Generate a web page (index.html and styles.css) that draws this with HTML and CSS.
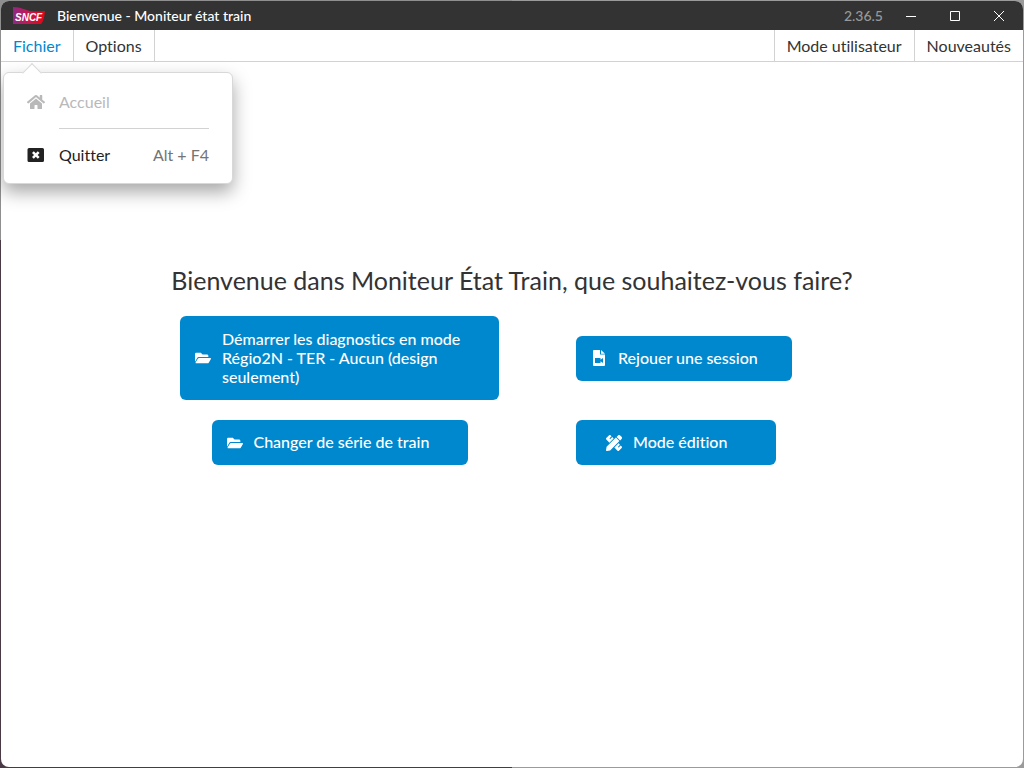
FILE: index.html
```html
<!DOCTYPE html>
<html lang="fr">
<head>
<meta charset="utf-8">
<title>Bienvenue - Moniteur état train</title>
<link rel="stylesheet" href="styles.css">
</head>
<body>
<svg class="defs" aria-hidden="true">
  <symbol id="folder" viewBox="0 0 576 512"><path d="M572.694 292.093L500.27 416.248A63.997 63.997 0 0 1 444.989 448H45.025c-18.523 0-30.064-20.093-20.731-36.093l72.424-124.155A64 64 0 0 1 152 256h399.964c18.523 0 30.064 20.093 20.73 36.093zM152 224h328v-48c0-26.51-21.49-48-48-48H272l-64-64H48C21.490 64 0 85.490 0 112v278.046l69.077-118.418C86.214 242.250 117.989 224 152 224z"/></symbol>
</svg>
<div class="window">
  <header class="titlebar">
    <svg class="logo" viewBox="0 0 32 17" role="img" aria-label="SNCF">
      <defs><linearGradient id="brand"><stop offset="0" stop-color="#8c2a86"/><stop offset=".45" stop-color="#c41854"/><stop offset="1" stop-color="#e3060f"/></linearGradient></defs>
      <path fill="url(#brand)" d="M0 0 C8 0 12 3 17 4 C22 5 27 4 32 4 Q31 14 28 17 L0 17Z"/>
      <text class="logo-text" x="2" y="14">SNCF</text>
    </svg>
    <span class="title">Bienvenue - Moniteur état train</span>
    <span class="version">2.36.5</span>
    <button class="control" aria-label="Réduire"><svg viewBox="0 0 12 12"><path d="M1 6.500h10"/></svg></button>
    <button class="control" aria-label="Agrandir"><svg viewBox="0 0 12 12"><path d="M1.500 1.500h9v9h-9z"/></svg></button>
    <button class="control" aria-label="Fermer"><svg viewBox="0 0 12 12"><path d="M1 1l10 10M11 1L1 11"/></svg></button>
  </header>
  <nav class="menubar">
    <div class="menu">
      <button class="menu-item active">Fichier</button>
      <div class="dropdown">
        <button class="entry" disabled>
          <svg class="entry-icon" viewBox="0 0 576 512"><path d="M280.370 148.260L96 300.110V464a16 16 0 0 0 16 16l112.060-.290a16 16 0 0 0 15.920-16V368a16 16 0 0 1 16-16h64a16 16 0 0 1 16 16v95.640a16 16 0 0 0 16 16.050L464 480a16 16 0 0 0 16-16V300L295.670 148.260a12.190 12.190 0 0 0-15.300 0zM571.600 251.470L488 182.560V44.050a12 12 0 0 0-12-12h-56a12 12 0 0 0-12 12v72.610L318.470 43a48 48 0 0 0-61 0L4.340 251.470a12 12 0 0 0-1.600 16.900l25.500 31A12 12 0 0 0 45.150 301l235.220-193.740a12.190 12.190 0 0 1 15.300 0L530.900 301a12 12 0 0 0 16.900-1.600l25.500-31a12 12 0 0 0-1.700-16.930z"/></svg>
          <span>Accueil</span>
        </button>
        <hr class="separator">
        <button class="entry">
          <svg class="entry-icon" viewBox="0 0 18 16"><path fill-rule="evenodd" d="M2 1h13.500a1.500 1.500 0 0 1 1.500 1.500v11a1.500 1.500 0 0 1-1.500 1.500h-13.500a1.500 1.500 0 0 1-1.500-1.500v-11a1.500 1.500 0 0 1 1.500-1.500zM5 6l2 2-2 2 1.800 1.800 2-2 2 2L12.600 10l-2-2 2-2-1.800-1.800-2 2-2-2z"/></svg>
          <span>Quitter</span>
          <kbd class="shortcut">Alt + F4</kbd>
        </button>
      </div>
    </div>
    <button class="menu-item">Options</button>
    <button class="menu-item push">Mode utilisateur</button>
    <button class="menu-item">Nouveautés</button>
  </nav>
  <main class="content">
    <h1 class="heading">Bienvenue dans Moniteur État Train, que souhaitez-vous faire?</h1>
    <div class="actions">
      <button class="action diagnostics"><svg><use href="#folder"/></svg><span>Démarrer les diagnostics en mode Régio2N - TER - Aucun (design seulement)</span></button>
      <button class="action left replay"><svg viewBox="0 0 16 16"><path fill-rule="evenodd" d="M3 0h6v4.500h5V15a1 1 0 0 1-1 1H3a1 1 0 0 1-1-1V1a1 1 0 0 1 1-1zM4 8v5h5.500v-1.800l2.500 1.800V8l-2.500 1.800V8zM10 0l4 3.700h-4z"/></svg><span>Rejouer une session</span></button>
      <button class="action series"><svg><use href="#folder"/></svg><span>Changer de série de train</span></button>
      <button class="action left edition"><svg viewBox="0 0 512 512"><path d="M109.460 244.040l134.580-134.560-44.120-44.120-61.680 61.680a7.919 7.919 0 0 1-11.210 0l-11.210-11.210c-3.100-3.100-3.100-8.120 0-11.210l61.680-61.680-33.640-33.650C131.470-3.100 111.390-3.100 99 9.290L9.290 99c-12.380 12.390-12.390 32.470 0 44.860l100.170 100.180zm388.470-116.800c18.760-18.760 18.750-49.170 0-67.930l-45.250-45.250c-18.760-18.760-49.180-18.760-67.950 0l-46.020 46.010 113.200 113.200 46.020-46.030zM316.080 82.710l-297 296.960L.32 487.110c-2.530 14.490 10.090 27.110 24.590 24.560l107.450-18.840L429.280 195.900 316.080 82.710zm186.630 285.430l-33.640-33.640-61.680 61.680c-3.100 3.100-8.120 3.100-11.210 0l-11.210-11.210c-3.090-3.100-3.090-8.120 0-11.210l61.680-61.680-44.140-44.140L267.930 402.500l100.210 100.200c12.390 12.390 32.470 12.390 44.860 0l89.710-89.700c12.390-12.390 12.390-32.470 0-44.860z"/></svg><span>Mode édition</span></button>
    </div>
  </main>
</div>
</body>
</html>
```
FILE: styles.css
```css
* { box-sizing: border-box; }

body {
  margin: 0;
  padding: 1px;
  min-height: 100vh;
  display: flex;
  background:
    linear-gradient(#8f8f8f 240px, #4a3a46 240px) left / 50% 100% no-repeat,
    #9b9b9b;
  color: #333;
  font: 16px/20px Lato, "Liberation Sans", sans-serif;
  font-variant-ligatures: none;
}

button {
  border: 0;
  background: none;
  color: inherit;
  font: inherit;
  font-variant-ligatures: none;
  padding: 0;
}

.defs { position: absolute; width: 0; height: 0; }

.window {
  flex: 1;
  display: flex;
  flex-direction: column;
  background: #fff;
  border-radius: 8px;
}

.titlebar {
  display: flex;
  align-items: center;
  height: 29px;
  padding: 0 2px 0 12px;
  background: #333;
  border-radius: 8px 8px 0 0;
  color: #fff;
  font-size: 14px;
  font-weight: 500;
}

.logo { width: 32px; height: 17px; }

.logo-text {
  fill: #fff;
  font: italic 700 10px "Liberation Sans", sans-serif;
}

.title { margin-left: 12px; }

.version {
  margin: 0 6px 0 auto;
  color: #999;
}

.control {
  display: grid;
  place-items: center;
  width: 44px;
  height: 29px;
}

.control svg {
  width: 12px;
  height: 12px;
  fill: none;
  stroke: #fff;
}

.menubar {
  display: flex;
  height: 32px;
  border-bottom: 1px solid #d2d2d2;
}

.menu { position: relative; display: flex; }

.menu-item {
  padding: 0 12px;
  border-right: 1px solid #d2d2d2;
}

.menu-item:last-child { border-right: 0; }
.menu > .menu-item.active { color: #0088ce; border-right: 1px solid #d2d2d2; }
.menu-item.push { margin-left: auto; border-left: 1px solid #d2d2d2; }

.dropdown {
  position: absolute;
  z-index: 1;
  top: 42px;
  left: 2px;
  width: 230px;
  padding: 19px 23px 18px;
  background: #fff;
  border: 1px solid #d8d8d8;
  border-radius: 6px;
  box-shadow: 0 8px 18px rgba(0, 0, 0, 0.35);
}

.dropdown::before {
  content: "";
  position: absolute;
  top: -7px;
  left: 21px;
  width: 13px;
  height: 13px;
  background: #fff;
  border: solid #d8d8d8;
  border-width: 1px 0 0 1px;
  transform: rotate(45deg);
}

.entry {
  display: flex;
  align-items: center;
  width: 100%;
  color: #222;
}

.entry:disabled { color: #b9b9b9; }

.entry-icon {
  width: 18px;
  height: 16px;
  margin-right: 14px;
  fill: currentColor;
}

.shortcut {
  margin-left: auto;
  color: #747474;
  font: inherit;
}

.separator {
  margin: 16px 0 16px 32px;
  border: 0;
  border-top: 1px solid #d2d2d2;
}

.content {
  display: flex;
  flex-direction: column;
  align-items: center;
  padding-top: 203px;
}

.heading {
  margin: 0 0 21px;
  font-size: 25px;
  font-weight: 400;
  line-height: 30px;
}

.actions {
  display: grid;
  grid-template-columns: 319px 268px;
  gap: 20px 77px;
  place-items: center;
}

.action {
  display: flex;
  align-items: center;
  gap: 11px;
  min-height: 45px;
  padding: 12px 15px;
  background: #0088ce;
  border-radius: 6px;
  color: #fff;
  font-weight: 500;
  line-height: 19px;
  text-align: left;
}

.action svg {
  flex: none;
  width: 16px;
  height: 16px;
  fill: #fff;
}

.action span { padding-bottom: 2px; }

.action.left { justify-self: start; }
.diagnostics { min-height: 84px; width: 100%; }
.replay { width: 216px; }
.series { width: 256px; }
.edition { width: 200px; padding-left: 30px; }
```
